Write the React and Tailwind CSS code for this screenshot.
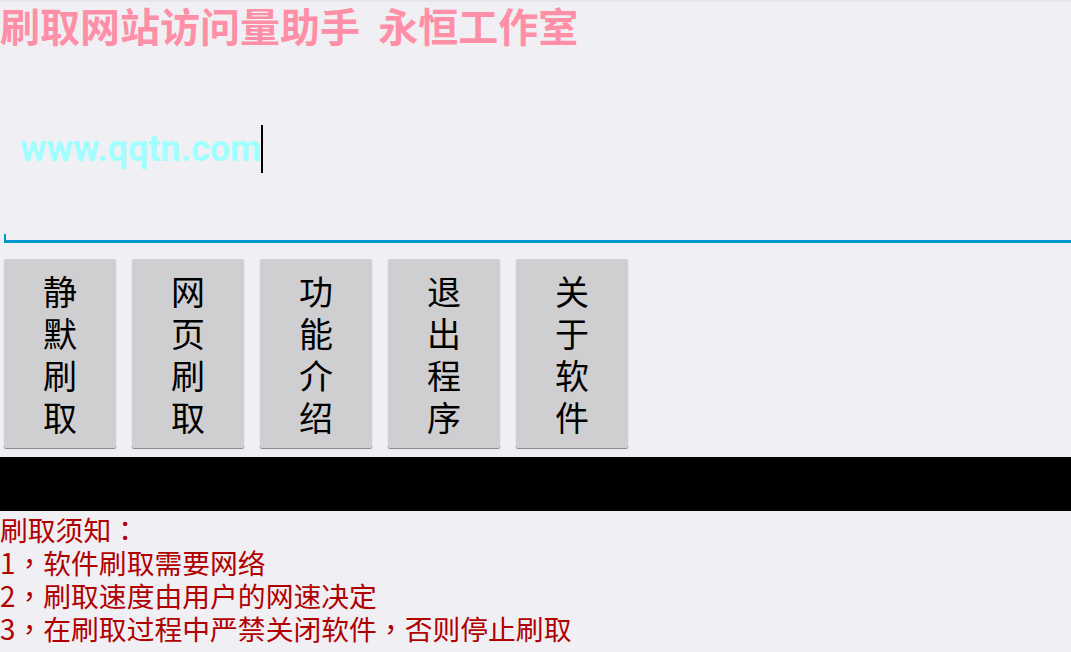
export default function App() {
  const buttons = ["静默刷取", "网页刷取", "功能介绍", "退出程序", "关于软件"];
  const P = ({ children }) => (
    <span className="font-['Noto_Sans_CJK_TC',sans-serif]">{children}</span>
  );
  return (
    <div className="w-[1071px] h-[652px] overflow-hidden bg-[#f0eff4] font-['Noto_Sans_CJK_SC',sans-serif]">
      <div className="h-[2px] bg-[#e6e5ea]" />
      <div className="h-[48px] leading-[46px] text-[40px] font-bold text-[#ff8fa6] whitespace-pre">
        刷取网站访问量助手  永恒工作室
      </div>
      <div className="h-[193px] flex flex-col">
        <div className="pt-[73px] pl-[20px] flex items-center h-[125px]">
          <span className="font-['Roboto',sans-serif] font-bold text-[36px] leading-[50px] text-[#a0ffff]">
            www.qqtn.com
          </span>
          <span className="w-[2px] h-[48px] bg-black" />
        </div>
        <div className="flex-1" />
        <div className="ml-[4px] h-[9px] border-l-2 border-b-[3px] border-[#0099cc]" />
      </div>
      <div className="flex gap-[16px] pl-[4px] mt-[16px]">
        {buttons.map((b) => (
          <div
            key={b}
            className="w-[112px] h-[189px] bg-[#cfcfd1] rounded-[2px] shadow-[0_1px_1px_rgba(0,0,0,0.45)] flex flex-col items-center justify-center text-black text-[34px] leading-[42px]"
          >
            {b.split("").map((c, i) => (
              <span key={i}>{c}</span>
            ))}
          </div>
        ))}
      </div>
      <div className="mt-[9px] h-[54px] bg-black" />
      <div className="pt-[2px] text-[27.8px] leading-[33px] text-[#b00000] whitespace-pre">
        <div>刷取须知<P>：</P></div>
        <div>1<P>，</P>软件刷取需要网络</div>
        <div>2<P>，</P>刷取速度由用户的网速决定</div>
        <div>3<P>，</P>在刷取过程中严禁关闭软件<P>，</P>否则停止刷取</div>
      </div>
    </div>
  );
}
